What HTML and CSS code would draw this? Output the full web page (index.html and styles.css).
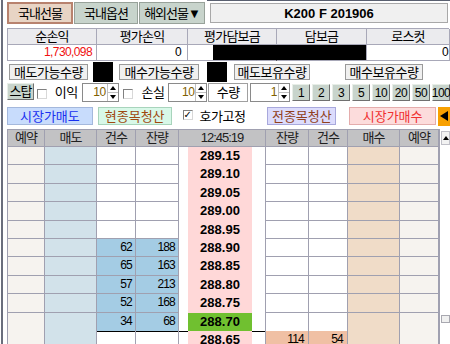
FILE: index.html
```html
<!DOCTYPE html>
<html lang="ko">
<head>
<meta charset="utf-8">
<title>선물 주문</title>
<link rel="stylesheet" href="styles.css">
</head>
<body>
<div class="app">
  <div class="tabs">
    <div class="tab tab-on">국내선물</div>
    <div class="tab tab-mid">국내옵션</div>
    <div class="tab">해외선물▼</div>
    <div class="symbol-wrap"><div class="symbol">K200 F 201906</div></div>
  </div>

  <div class="summary">
    <div class="sh">순손익</div>
    <div class="sh">평가손익</div>
    <div class="sh">평가담보금</div>
    <div class="sh">담보금</div>
    <div class="sh">로스컷</div>
    <div class="sv red">1,730,098</div>
    <div class="sv v2">0</div>
    <div class="sv mask-part"><span class="mask"></span></div>
    <div class="sv mask-full"></div>
    <div class="sv v5">0</div>
  </div>

  <div class="qty">
    <div class="qlabel l1">매도가능수량</div>
    <div class="qblack b1"></div>
    <div class="qlabel l2">매수가능수량</div>
    <div class="qblack b2"></div>
    <div class="qlabel l3">매도보유수량</div>
    <div class="qfield"></div>
    <div class="qlabel l4">매수보유수량</div>
  </div>

  <div class="ctrl">
    <div class="btn stop">스탑</div>
    <span class="chk c1"></span>
    <span class="lbl lb1">이익</span>
    <div class="spin s1"><span class="sval">10</span><span class="sarr"><span class="sup"><i class="tri-up"></i></span><span class="sdn"><i class="tri-dn"></i></span></span></div>
    <span class="chk c2"></span>
    <span class="lbl lb2">손실</span>
    <div class="spin s2"><span class="sval">10</span><span class="sarr"><span class="sup"><i class="tri-up"></i></span><span class="sdn"><i class="tri-dn"></i></span></span></div>
    <div class="qtylbl">수량</div>
    <div class="spin s3"><span class="sval">1</span><span class="sarr"><span class="sup"><i class="tri-up"></i></span><span class="sdn"><i class="tri-dn"></i></span></span></div>
    <div class="nums">
      <div class="btn n">1</div>
      <div class="btn n">2</div>
      <div class="btn n">3</div>
      <div class="btn n">5</div>
      <div class="btn n">10</div>
      <div class="btn n">20</div>
      <div class="btn n">50</div>
      <div class="btn n">100</div>
    </div>
  </div>

  <div class="actions">
    <div class="act sell">시장가매도</div>
    <div class="act close1">현종목청산</div>
    <span class="chk c3">✓</span>
    <span class="lbl lb3">호가고정</span>
    <div class="act close2">전종목청산</div>
    <div class="act buy">시장가매수</div>
    <div class="act arrow"><i class="tri-left"></i></div>
  </div>

  <div class="board">
    <div class="grid">
      <div class="row head">
        <div class="h">예약</div><div class="h">매도</div><div class="h">건수</div><div class="h">잔량</div>
        <div class="h">12:45:19</div>
        <div class="h">잔량</div><div class="h">건수</div><div class="h">매수</div><div class="h hl">예약</div>
      </div>

      <div class="row">
        <div class="c rs"></div><div class="c sd"></div><div class="c"></div><div class="c"></div>
        <div class="tc"><div class="p">289.15</div></div>
        <div class="c"></div><div class="c"></div><div class="c bd"></div><div class="c rs last"></div>
      </div>
      <div class="row">
        <div class="c rs"></div><div class="c sd"></div><div class="c"></div><div class="c"></div>
        <div class="tc"><div class="p">289.10</div></div>
        <div class="c"></div><div class="c"></div><div class="c bd"></div><div class="c rs last"></div>
      </div>
      <div class="row">
        <div class="c rs"></div><div class="c sd"></div><div class="c"></div><div class="c"></div>
        <div class="tc"><div class="p">289.05</div></div>
        <div class="c"></div><div class="c"></div><div class="c bd"></div><div class="c rs last"></div>
      </div>
      <div class="row">
        <div class="c rs"></div><div class="c sd"></div><div class="c"></div><div class="c"></div>
        <div class="tc"><div class="p">289.00</div></div>
        <div class="c"></div><div class="c"></div><div class="c bd"></div><div class="c rs last"></div>
      </div>
      <div class="row">
        <div class="c rs"></div><div class="c sd"></div><div class="c"></div><div class="c"></div>
        <div class="tc"><div class="p">288.95</div></div>
        <div class="c"></div><div class="c"></div><div class="c bd"></div><div class="c rs last"></div>
      </div>
      <div class="row">
        <div class="c rs"></div><div class="c sd"></div><div class="c sq">62</div><div class="c sq">188</div>
        <div class="tc"><div class="p">288.90</div></div>
        <div class="c"></div><div class="c"></div><div class="c bd"></div><div class="c rs last"></div>
      </div>
      <div class="row">
        <div class="c rs"></div><div class="c sd"></div><div class="c sq">65</div><div class="c sq">163</div>
        <div class="tc"><div class="p">288.85</div></div>
        <div class="c"></div><div class="c"></div><div class="c bd"></div><div class="c rs last"></div>
      </div>
      <div class="row">
        <div class="c rs"></div><div class="c sd"></div><div class="c sq">57</div><div class="c sq">213</div>
        <div class="tc"><div class="p">288.80</div></div>
        <div class="c"></div><div class="c"></div><div class="c bd"></div><div class="c rs last"></div>
      </div>
      <div class="row">
        <div class="c rs"></div><div class="c sd"></div><div class="c sq">52</div><div class="c sq">168</div>
        <div class="tc"><div class="p">288.75</div></div>
        <div class="c"></div><div class="c"></div><div class="c bd"></div><div class="c rs last"></div>
      </div>
      <div class="row split">
        <div class="c rs"></div><div class="c sd"></div><div class="c sq">34</div><div class="c sq">68</div>
        <div class="tc"><div class="p cur">288.70</div></div>
        <div class="c"></div><div class="c"></div><div class="c bd"></div><div class="c rs last"></div>
      </div>
      <div class="row">
        <div class="c rs"></div><div class="c sd"></div><div class="c"></div><div class="c"></div>
        <div class="tc"><div class="p">288.65</div></div>
        <div class="c bq">114</div><div class="c bq">54</div><div class="c bd"></div><div class="c rs last"></div>
      </div>
    </div>
    <div class="scroll">
      <div class="sbtn"><i class="tri-up"></i></div>
      <div class="thumb"></div>
    </div>
  </div>
</div>
</body>
</html>
```

FILE: styles.css
```css
* { box-sizing: border-box; }

body {
  margin: 0;
  background: #fff;
  font-family: "Liberation Sans", "Noto Sans CJK KR", sans-serif;
  font-size: 12px;
  color: #000;
}

.app {
  width: 449px;
  height: 344px;
  margin-left: 1px;
  border-left: 2px solid #6a6e7c;
  padding-left: 4px;
  overflow: hidden;
}

/* ---------- tabs ---------- */
.tabs { display: flex; height: 26px; }
.tab {
  margin-top: 2px;
  height: 22px;
  width: 66px;
  margin-right: 1px;
  display: flex;
  align-items: center;
  justify-content: center;
  background: #c8d4cc;
  border: 1px solid #98a29a;
  font-size: 13px;
  letter-spacing: -1px;
  line-height: 1;
}
.tab-mid { width: 64px; }
.tab-on { background: #e8d4c4; border: 2px solid #b8826e; }
.symbol-wrap {
  flex: 1;
  margin-left: 1px;
  border-top: 1px solid #5a6070;
  padding: 2px 0 0 3px;
}
.symbol {
  height: 20px;
  width: 238px;
  border: 1px solid #a8a8a8;
  background: #f0f0f0;
  font-weight: bold;
  font-size: 13px;
  display: flex;
  align-items: center;
  justify-content: center;
}

/* ---------- summary ---------- */
.summary {
  display: grid;
  grid-template-columns: 89px 91px 89px 90px 83px;
  grid-template-rows: 16px 16px;
  margin-top: 2px;
  width: 442px;
  border-top: 1px solid #a8a8b8;
  border-left: 1px solid #a8a8b8;
}
.sh, .sv {
  border-right: 1px solid #a8a8b8;
  border-bottom: 1px solid #a8a8b8;
  line-height: 15px;
}
.sh { background: #ebebee; text-align: center; font-size: 13px; letter-spacing: -0.8px; }
.sv { background: #fff; text-align: right; padding-right: 4px; font-size: 12px; letter-spacing: -0.6px; }
.sv.red { color: #f01010; }
.sv.v2 { padding-right: 6px; }
.sv.v5 { padding-right: 1px; }
.mask-part { display: flex; justify-content: flex-end; padding: 0; border-right-color: #000; }
.mask { display: block; width: 63px; height: 100%; background: #000; }
.mask-full { background: #000; }

/* ---------- quantity row ---------- */
.qty { display: flex; align-items: center; height: 20px; margin-top: 1px; }
.qlabel {
  height: 16px;
  display: flex;
  align-items: center;
  justify-content: center;
  background: #f0f0f0;
  border: 1px solid #9a9a9a;
  font-size: 13px;
  letter-spacing: -0.5px;
  line-height: 1;
}
.l1 { margin-left: 2px; width: 79px; }
.qblack { height: 20px; width: 20px; background: #000; }
.b1 { margin-left: 5px; }
.l2 { margin-left: 6px; width: 80px; }
.b2 { margin-left: 8px; }
.l3 { margin-left: 7px; width: 76px; }
.qfield { width: 35px; height: 20px; background: #fff; }
.l4 { width: 78px; }

/* ---------- control row ---------- */
.ctrl { display: flex; align-items: center; height: 19px; margin-top: 1px; }
.btn {
  display: flex;
  align-items: center;
  justify-content: center;
  background: #c8d4cc;
  border: 1px solid;
  border-color: #e8eee8 #707070 #707070 #e8eee8;
  line-height: 1;
}
.stop { width: 27px; height: 17px; align-self: flex-start; font-size: 13px; letter-spacing: -1px; }
.chk {
  width: 10px;
  height: 10px;
  border: 1px solid;
  border-color: #808080 #d8d8d8 #d8d8d8 #808080;
  background: #fff;
  align-self: flex-start;
  margin-top: 6px;
}
.c1 { margin-left: 3px; }
.lbl { line-height: 1; font-size: 13px; letter-spacing: -0.5px; }
.lb1 { margin-left: 8px; width: 27px; }
.c2 { margin-left: 4px; }
.lb2 { margin-left: 9px; width: 27px; }

.spin {
  display: flex;
  height: 19px;
  border: 1px solid #8a8a8a;
  background: #fff;
}
.s1 { width: 37px; }
.s2 { width: 39px; }
.s3 { width: 40px; margin-left: 2px; }
.sval {
  flex: 1;
  text-align: right;
  color: #806000;
  font-size: 12px;
  line-height: 17px;
  padding-right: 1px;
  letter-spacing: -0.5px;
}
.sarr {
  width: 11px;
  display: flex;
  flex-direction: column;
  border-left: 1px solid #c0c0c0;
}
.sup, .sdn { flex: 1; display: flex; align-items: center; justify-content: center; }
.sup { border-bottom: 1px solid #c0c0c0; }
.tri-up, .tri-dn { display: block; width: 0; height: 0; border-left: 3.5px solid transparent; border-right: 3.5px solid transparent; }
.tri-up { border-bottom: 4px solid #000; }
.tri-dn { border-top: 4px solid #000; }

.qtylbl {
  margin-left: 1px;
  width: 40px;
  height: 19px;
  border: 1px solid #a0a0a0;
  background: #fff;
  display: flex;
  align-items: center;
  justify-content: center;
  font-size: 13px;
  letter-spacing: -0.5px;
  line-height: 1;
}
.nums { display: flex; margin-left: 2px; gap: 2px; }
.n { width: 18px; height: 17px; font-size: 12px; letter-spacing: -0.5px; }

/* ---------- action row ---------- */
.actions { display: flex; align-items: center; height: 20px; margin-top: 4px; }
.act {
  height: 18px;
  display: flex;
  align-items: center;
  justify-content: center;
  border: 1px solid;
  font-size: 13px;
  line-height: 1;
}
.sell { width: 86px; background: #c8dcfc; border-color: #a4b8dc; color: #1830f0; }
.close1 { margin-left: 5px; width: 74px; background: #d8f8e8; border-color: #a8d4bc; color: #a04810; }
.c3 {
  margin-left: 11px;
  margin-top: 4px;
  font-size: 10px;
  line-height: 8px;
  text-align: center;
  font-family: "DejaVu Sans", sans-serif;
}
.lb3 { margin-left: 7px; width: 68px; }
.close2 { width: 69px; background: #dcdcfc; border-color: #a8a8dc; color: #904020; }
.buy { margin-left: 13px; width: 87px; background: #fcdcdc; border-color: #e4acac; color: #f03030; }
.arrow {
  margin-left: 2px;
  width: 12px;
  height: 19px;
  background: #f8a000;
  border: none;
  justify-content: flex-start;
  padding-left: 2px;
}
.tri-left { display: block; width: 0; height: 0; border-top: 5px solid transparent; border-bottom: 5px solid transparent; border-right: 8px solid #000; }

/* ---------- order board ---------- */
.board { display: flex; margin-top: 3px; }
.grid {
  width: 433px;
  border-left: 1px solid #a0a0b0;
  border-top: 1px solid #a0a0b0;
}
.row {
  display: grid;
  grid-template-columns: 37px 52px 39px 43px 87px 43px 39px 52px 40px;
  height: 18.4px;
}
.row.head { height: 17px; }
.h {
  background: #c2c2c4;
  border-right: 1px solid #a0a0b0;
  border-bottom: 1px solid #a0a0b0;
  text-align: center;
  font-size: 13px;
  letter-spacing: -1px;
  line-height: 16px;
  color: #202020;
}
.h.hl, .c.last { border-right-width: 2px; }
.c {
  border-right: 1px solid #a0a0b0;
  border-bottom: 1px solid #a0a0b0;
  text-align: right;
  padding-right: 3px;
  font-size: 12px;
  line-height: 17px;
  letter-spacing: -0.8px;
}
.c.rs { background: #f6f3ef; }
.c.sd { background: #d2e2ea; }
.c.sq { background: #a4cce4; }
.c.bd { background: #f0dcc8; }
.c.bq { background: #f0c0a4; padding-right: 4px; }
.tc { border-right: 1px solid #a0a0b0; }
.p {
  margin-left: 9px;
  width: 64px;
  height: 100%;
  background: #ffd8d8;
  font-weight: bold;
  font-size: 13px;
  line-height: 18px;
  text-align: center;
}
.p.cur { background: #70c030; }
.row.split .c { border-bottom-color: #000; }
.row.split .tc { border-bottom: 1px solid #000; }

.scroll { width: 10px; margin-left: 1px; }
.sbtn {
  margin-top: 2px;
  width: 9px;
  height: 14px;
  border: 1px solid #c0c0c8;
  background: #f2f2f2;
  display: flex;
  align-items: center;
  justify-content: center;
}
.thumb {
  margin-top: 170px;
  width: 9px;
  height: 8px;
  border: 1px solid #a8a8b0;
  background: #f0f0f0;
}
```
